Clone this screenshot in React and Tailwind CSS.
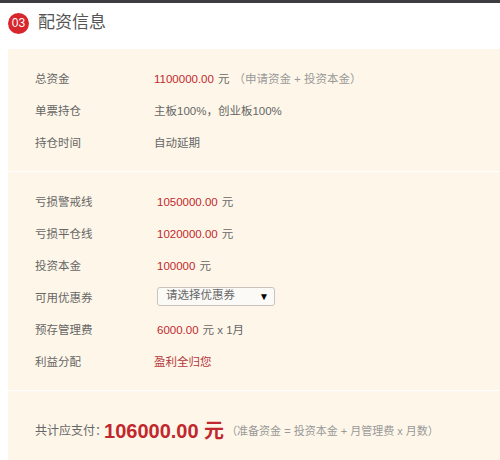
import React from "react";

const font = { fontFamily: '"Liberation Sans", "Noto Sans CJK SC", sans-serif' };

function Row({ label, labelWidth, children }) {
    return (
        <div className="flex items-center h-[32px]">
            <div className={`${labelWidth} shrink-0 text-[#666]`}>{label}</div>
            <div className="flex items-center">{children}</div>
        </div>
    );
}

export default function App() {
    return (
        <div className="w-[500px] h-[460px] bg-white overflow-hidden text-[11.5px]" style={font}>
            <div className="h-[3px] bg-[#3d3d3f]" />

            {/* 标题 */}
            <div className="flex items-center h-[34px] pl-[8px] mt-[3px]">
                <div className="w-[21px] h-[21px] rounded-full bg-[#d7262c] text-white text-[12px] flex items-center justify-center">03</div>
                <div className="ml-[9px] text-[17px] text-[#555]">配资信息</div>
            </div>

            <div className="ml-[8px] mt-[9px] flex flex-col gap-px">
                {/* 基本信息 */}
                <div className="bg-[#fef7e9] pt-[15px] pb-[11px] pl-[27px]">
                    <Row label="总资金" labelWidth="w-[119px]">
                        <span className="text-[#c1272d]">1100000.00</span>
                        <span className="text-[#666] ml-[4px]">元</span>
                        <span className="text-[#999] ml-[4px]">（申请资金 + 投资本金）</span>
                    </Row>
                    <Row label="单票持仓" labelWidth="w-[119px]">
                        <span className="text-[#666]">主板100%，创业板100%</span>
                    </Row>
                    <Row label="持仓时间" labelWidth="w-[119px]">
                        <span className="text-[#666]">自动延期</span>
                    </Row>
                </div>

                {/* 风控与费用 */}
                <div className="bg-[#fef7e9] pt-[15px] pb-[11px] pl-[27px]">
                    <Row label="亏损警戒线" labelWidth="w-[122px]">
                        <span className="text-[#c1272d]">1050000.00</span>
                        <span className="text-[#666] ml-[4px]">元</span>
                    </Row>
                    <Row label="亏损平仓线" labelWidth="w-[122px]">
                        <span className="text-[#c1272d]">1020000.00</span>
                        <span className="text-[#666] ml-[4px]">元</span>
                    </Row>
                    <Row label="投资本金" labelWidth="w-[122px]">
                        <span className="text-[#c1272d]">100000</span>
                        <span className="text-[#666] ml-[4px]">元</span>
                    </Row>
                    <Row label="可用优惠券" labelWidth="w-[122px]">
                        <div className="w-[118px] h-[19px] border border-[#c9c4bb] rounded-[3px] bg-[#fbfaf7] flex items-center justify-between pl-[8px] pr-[5px] -mt-[6px]">
                            <span className="text-[#666]">请选择优惠券</span>
                            <span className="text-[10px] text-black">▼</span>
                        </div>
                    </Row>
                    <Row label="预存管理费" labelWidth="w-[122px]">
                        <span className="text-[#c1272d]">6000.00</span>
                        <span className="text-[#666] ml-[4px]">元 x 1月</span>
                    </Row>
                    <Row label="利益分配" labelWidth="w-[119px]">
                        <span className="text-[#b5363a]">盈利全归您</span>
                    </Row>
                </div>

                {/* 合计 */}
                <div className="bg-[#fef7e9] h-[80px] pl-[27px] pt-[25px]">
                    <div className="flex items-center">
                        <span className="text-[#666] text-[12px]">共计应支付：</span>
                        <span className="text-[#c1272d] text-[20px] font-bold -ml-[3px]">106000.00 元</span>
                        <span className="text-[#999] text-[11px] ml-[2px]">（准备资金 = 投资本金 + 月管理费 x 月数）</span>
                    </div>
                </div>
            </div>
        </div>
    );
}
